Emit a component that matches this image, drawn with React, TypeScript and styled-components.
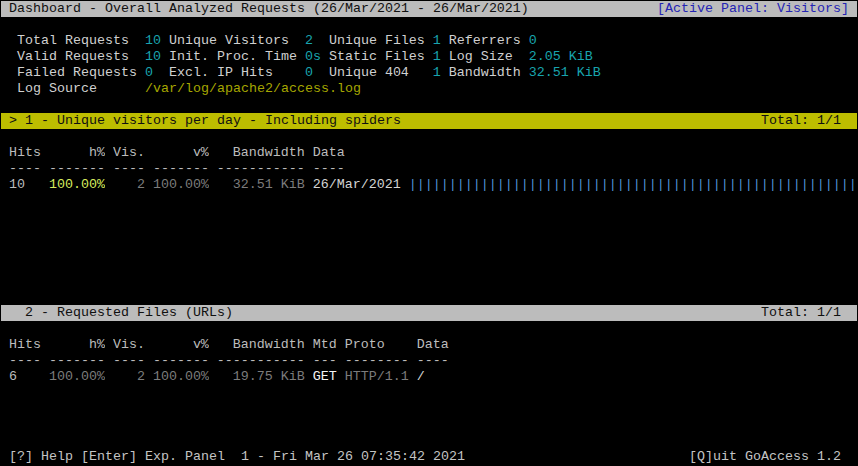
import React from "react";
import styled, { createGlobalStyle } from "styled-components";

const GlobalStyle = createGlobalStyle`
  html, body {
    margin: 0;
    padding: 0;
    background: #000000;
  }
`;

const Terminal = styled.div`
  box-sizing: border-box;
  width: 858px;
  height: 466px;
  padding: 1px;
  background: #000000;
  display: flex;
  flex-direction: column;
  font-family: "Liberation Mono", "DejaVu Sans Mono", monospace;
  font-size: 13.3333px;
  line-height: 16px;
  color: #c0c0c0;
  white-space: pre;
  overflow: hidden;
`;

const Bar = styled.div<{ $tone: "gray" | "yellow"; $right: number }>`
  display: flex;
  justify-content: space-between;
  height: 16px;
  padding: 0 ${(p) => p.$right}ch 0 1ch;
  background: ${(p) => (p.$tone === "yellow" ? "#bdbd00" : "#bcbcbc")};
  color: #101010;
`;

const ActivePanel = styled.span`
  color: #2424b4;
`;

const Overview = styled.div`
  display: grid;
  grid-template-columns: 16ch 3ch 17ch 3ch 13ch 2ch 10ch 1fr;
  padding: 16px 0 16px 2ch;
`;

const Label = styled.span`
  color: #d0d0d0;
`;

const Value = styled.span`
  color: #18a4ae;
`;

const LogPath = styled.span`
  grid-column: 2 / -1;
  color: #a6a600;
`;

const Panel = styled.section<{ $rows: number }>`
  height: ${(p) => p.$rows * 16}px;
`;

const Table = styled.div<{ $cols: string }>`
  display: grid;
  grid-template-columns: ${(p) => p.$cols};
  column-gap: 1ch;
  padding: 16px 0 0 1ch;
`;

type Tone = "plain" | "white" | "dim" | "lime" | "bright";

const toneColor: Record<Tone, string> = {
  plain: "#bcbcbc",
  white: "#d4d4d4",
  dim: "#7c7c7c",
  lime: "#d6ec5e",
  bright: "#f4f4f4",
};

const Cell = styled.span<{ $right?: boolean; $tone?: Tone }>`
  text-align: ${(p) => (p.$right ? "right" : "left")};
  color: ${(p) => toneColor[p.$tone || "plain"]};
  overflow: hidden;
`;

const Bars = styled.span`
  color: #4f90d6;
`;

const Footer = styled.div`
  margin-top: auto;
  display: flex;
  justify-content: space-between;
  padding: 0 2ch 0 1ch;
  color: #c4c4c4;
`;

const stats = [
  ["Total Requests", "10", "Unique Visitors", "2", "Unique Files", "1", "Referrers", "0"],
  ["Valid Requests", "10", "Init. Proc. Time", "0s", "Static Files", "1", "Log Size", "2.05 KiB"],
  ["Failed Requests", "0", "Excl. IP Hits", "0", "Unique 404", "1", "Bandwidth", "32.51 KiB"],
];

const visitorCols = "4ch 7ch 4ch 7ch 11ch 1fr";
const fileCols = "4ch 7ch 4ch 7ch 11ch 3ch 8ch 1fr";

const right = [false, true, true, true, true, false, false, false];

export default function App() {
  return (
    <>
      <GlobalStyle />
      <Terminal>
        <Bar $tone="gray" $right={1}>
          <span>Dashboard - Overall Analyzed Requests (26/Mar/2021 - 26/Mar/2021)</span>
          <ActivePanel>[Active Panel: Visitors]</ActivePanel>
        </Bar>

        <Overview>
          {stats.map((row) =>
            row.map((text, i) =>
              i % 2 === 0 ? (
                <Label key={row[0] + i}>{text}</Label>
              ) : (
                <Value key={row[0] + i}>{text}</Value>
              )
            )
          )}
          <Label>Log Source</Label>
          <LogPath>/var/log/apache2/access.log</LogPath>
        </Overview>

        <Panel $rows={12}>
          <Bar $tone="yellow" $right={2}>
            <span>&gt; 1 - Unique visitors per day - Including spiders</span>
            <span>Total: 1/1</span>
          </Bar>
          <Table $cols={visitorCols}>
            {["Hits", "h%", "Vis.", "v%", "Bandwidth", "Data"].map((h, i) => (
              <Cell key={h} $right={right[i]}>{h}</Cell>
            ))}
            {["----", "-------", "----", "-------", "-----------", "----"].map((d, i) => (
              <Cell key={i}>{d}</Cell>
            ))}
            <Cell>10</Cell>
            <Cell $right $tone="lime">100.00%</Cell>
            <Cell $right $tone="dim">2</Cell>
            <Cell $right $tone="dim">100.00%</Cell>
            <Cell $right $tone="dim">32.51 KiB</Cell>
            <Cell $tone="white">
              26/Mar/2021 <Bars>{"|".repeat(56)}</Bars>
            </Cell>
          </Table>
        </Panel>

        <Panel $rows={9}>
          <Bar $tone="gray" $right={2}>
            <span>  2 - Requested Files (URLs)</span>
            <span>Total: 1/1</span>
          </Bar>
          <Table $cols={fileCols}>
            {["Hits", "h%", "Vis.", "v%", "Bandwidth", "Mtd", "Proto", "Data"].map((h, i) => (
              <Cell key={h} $right={right[i]}>{h}</Cell>
            ))}
            {["----", "-------", "----", "-------", "-----------", "---", "--------", "----"].map(
              (d, i) => (
                <Cell key={i}>{d}</Cell>
              )
            )}
            <Cell>6</Cell>
            <Cell $right $tone="dim">100.00%</Cell>
            <Cell $right $tone="dim">2</Cell>
            <Cell $right $tone="dim">100.00%</Cell>
            <Cell $right $tone="dim">19.75 KiB</Cell>
            <Cell $tone="bright">GET</Cell>
            <Cell $tone="dim">HTTP/1.1</Cell>
            <Cell $tone="white">/</Cell>
          </Table>
        </Panel>

        <Footer>
          <span>[?] Help [Enter] Exp. Panel  1 - Fri Mar 26 07:35:42 2021</span>
          <span>[Q]uit GoAccess 1.2</span>
        </Footer>
      </Terminal>
    </>
  );
}
